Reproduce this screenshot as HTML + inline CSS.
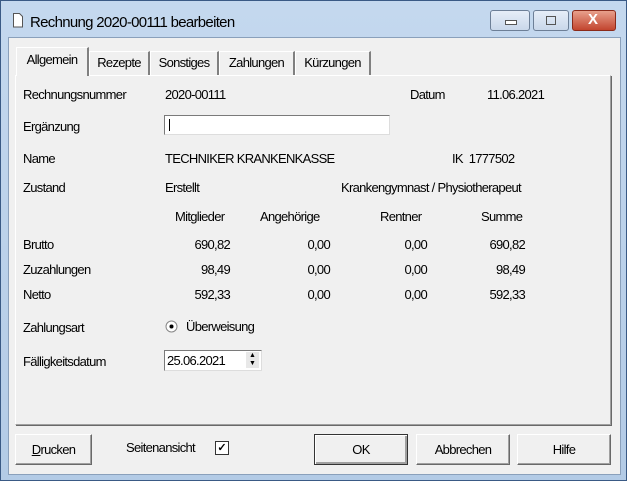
<!DOCTYPE html><html><head><style>
body{margin:0;width:627px;height:481px;overflow:hidden;background:#b9d1ea;font-family:"Liberation Sans",sans-serif;font-size:13px;color:#000;letter-spacing:-0.7px}
.a{position:absolute;white-space:nowrap}
.win{position:absolute;left:0;top:0;width:625px;height:479px;border:1px solid #3a5a85;background:linear-gradient(#c4d8ee,#b3cbe6)}
.client{position:absolute;left:8px;top:37px;width:611px;height:436px;background:#f0f0f0;border:1px solid #8aa0bb}
.panel{position:absolute;left:15px;top:75px;width:594px;height:348px;border:1px solid #fff;border-right-color:#a0a0a0;border-bottom-color:#a0a0a0;box-shadow:1px 1px 0 #696969}
.tab{position:absolute;top:51px;height:24px;box-sizing:border-box;border:1px solid #fff;border-right:2px solid #808080;border-bottom:none;line-height:22px;text-align:center;background:#f0f0f0}
.btn{position:absolute;top:434px;height:29px;background:#f0f0f0;border:1px solid #fff;border-right-color:#696969;border-bottom-color:#696969;box-shadow:inset -1px -1px 0 #a0a0a0;text-align:center;line-height:30px}
.tb{position:absolute;top:10px;height:19px;border:1px solid #6d7f97;border-radius:3px;background:linear-gradient(#e6eef8,#c9d7ea)}
.r{text-align:right}
</style></head><body>
<div class="win"></div>
<svg class="a" style="left:12px;top:13px" width="12" height="15"><path d="M1.5 .5h6l3 3v10.5h-9z" fill="#fff" stroke="#555"/></svg>
<div class="a" style="left:30px;top:14px;font-size:15px">Rechnung 2020-00111 bearbeiten</div>
<div class="tb" style="left:490px;width:38px"><div class="a" style="left:14px;top:9px;width:10px;height:3px;border:1px solid #555;background:#fff"></div></div>
<div class="tb" style="left:533px;width:34px"><div class="a" style="left:12px;top:5px;width:8px;height:7px;border:1px solid #555"></div></div>
<div class="tb" style="left:572px;width:42px;background:linear-gradient(#e8a08c,#c2452f);border-color:#8a2a1a"><div class="a" style="left:15px;top:0px;color:#fff;font-size:15px;font-weight:bold">X</div></div>
<div class="client"></div>
<div class="panel"></div>
<div class="tab" style="left:16px;top:47px;width:73px;height:29px;z-index:2;line-height:24px">Allgemein</div>
<div class="tab" style="left:89px;width:61px">Rezepte</div>
<div class="tab" style="left:150px;width:69px">Sonstiges</div>
<div class="tab" style="left:219px;width:76px">Zahlungen</div>
<div class="tab" style="left:295px;width:76px">Kürzungen</div>
<div class="a" style="left:23px;top:87px">Rechnungsnummer</div>
<div class="a" style="left:165px;top:87px">2020-00111</div>
<div class="a" style="left:410px;top:87px">Datum</div>
<div class="a" style="left:487px;top:87px">11.06.2021</div>
<div class="a" style="left:23px;top:119px">Ergänzung</div>
<div class="a" style="left:164px;top:115px;width:224px;height:18px;background:#fff;border:1px solid #7a7a7a;border-right-color:#ddd;border-bottom-color:#ddd"><div class="a" style="left:4px;top:3px;width:1px;height:12px;background:#000"></div></div>
<div class="a" style="left:23px;top:151px">Name</div>
<div class="a" style="left:165px;top:151px">TECHNIKER KRANKENKASSE</div>
<div class="a" style="left:452px;top:151px">IK&nbsp; 1777502</div>
<div class="a" style="left:23px;top:180px">Zustand</div>
<div class="a" style="left:165px;top:180px">Erstellt</div>
<div class="a" style="left:341px;top:180px">Krankengymnast / Physiotherapeut</div>
<div class="a" style="left:175px;top:209px">Mitglieder</div>
<div class="a" style="left:260px;top:209px">Angehörige</div>
<div class="a" style="left:380px;top:209px">Rentner</div>
<div class="a" style="left:481px;top:209px">Summe</div>
<div class="a" style="left:23px;top:237px">Brutto</div>
<div class="a" style="left:23px;top:262px">Zuzahlungen</div>
<div class="a" style="left:23px;top:287px">Netto</div>
<div class="a r" style="left:150px;width:80px;top:237px">690,82</div>
<div class="a r" style="left:250px;width:80px;top:237px">0,00</div>
<div class="a r" style="left:347px;width:80px;top:237px">0,00</div>
<div class="a r" style="left:445px;width:80px;top:237px">690,82</div>
<div class="a r" style="left:150px;width:80px;top:262px">98,49</div>
<div class="a r" style="left:250px;width:80px;top:262px">0,00</div>
<div class="a r" style="left:347px;width:80px;top:262px">0,00</div>
<div class="a r" style="left:445px;width:80px;top:262px">98,49</div>
<div class="a r" style="left:150px;width:80px;top:287px">592,33</div>
<div class="a r" style="left:250px;width:80px;top:287px">0,00</div>
<div class="a r" style="left:347px;width:80px;top:287px">0,00</div>
<div class="a r" style="left:445px;width:80px;top:287px">592,33</div>
<div class="a" style="left:23px;top:320px">Zahlungsart</div>
<svg class="a" style="left:165px;top:320px" width="13" height="13"><circle cx="6.5" cy="6.5" r="5.5" fill="#fff" stroke="#888"/><circle cx="6.5" cy="6.5" r="2" fill="#000"/></svg>
<div class="a" style="left:186px;top:319px">Überweisung</div>
<div class="a" style="left:23px;top:354px">Fälligkeitsdatum</div>
<div class="a" style="left:164px;top:350px;width:96px;height:19px;background:#fff;border:1px solid #7a7a7a;border-right-color:#ddd;border-bottom-color:#ddd"><div class="a" style="left:2px;top:2px">25.06.2021</div><div class="a" style="left:81px;top:1px;width:13px;height:16px;background:#e8e8e8;font-size:7px;line-height:8px;text-align:center;letter-spacing:0">▲<br>▼</div></div>
<div class="btn" style="left:15px;width:75px"><u>D</u>rucken</div>
<div class="a" style="left:126px;top:440px">Seitenansicht</div>
<div class="a" style="left:215px;top:441px;width:12px;height:12px;border:1px solid #333;background:#fff;font-size:11px;line-height:12px;text-align:center;font-weight:bold;letter-spacing:0">✓</div>
<div class="btn" style="left:314px;width:92px;border:1px solid #333;box-shadow:inset 1px 1px 0 #fff,inset -2px -2px 0 #a0a0a0">OK</div>
<div class="btn" style="left:416px;width:92px">Abbrechen</div>
<div class="btn" style="left:517px;width:92px">Hilfe</div>
</body></html>
